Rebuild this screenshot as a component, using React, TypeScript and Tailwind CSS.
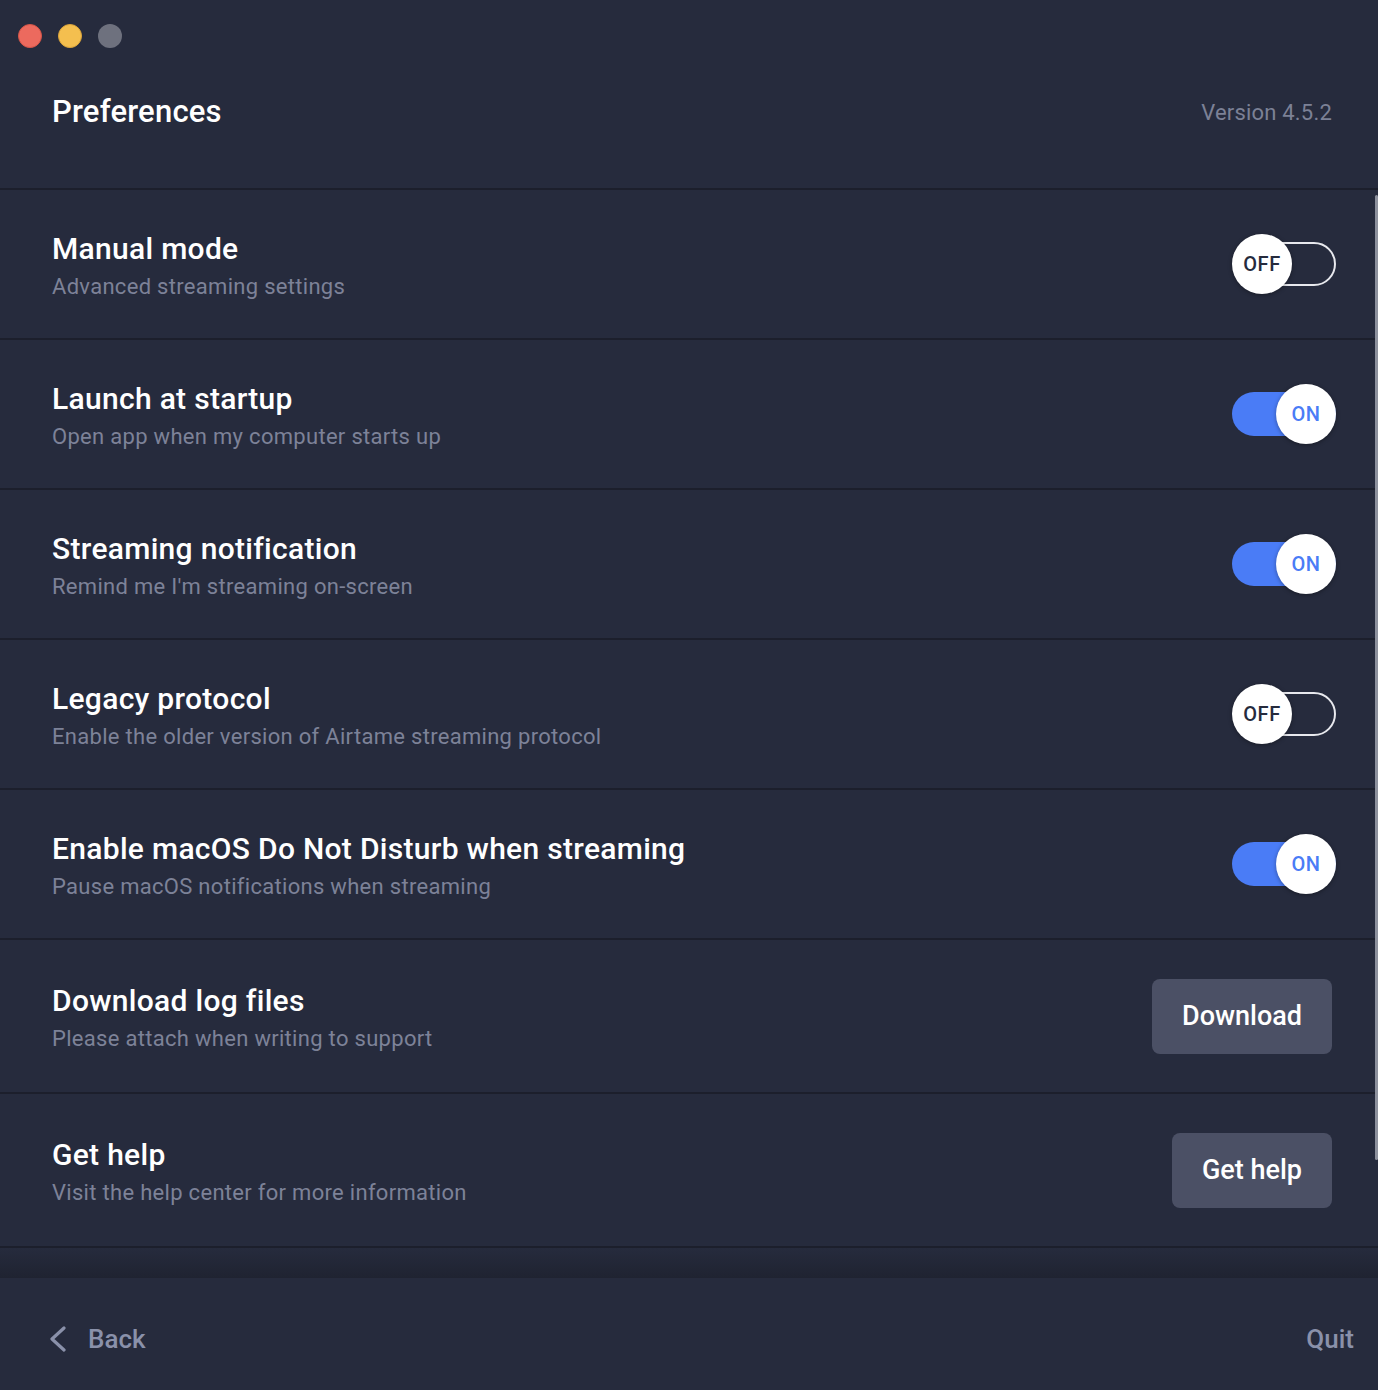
const font = { fontFamily: 'Roboto, "Noto Sans", sans-serif' }

type Row = {
  title: string
  subtitle: string
  toggle?: boolean
  button?: string
}

const rows: Row[] = [
  { title: 'Manual mode', subtitle: 'Advanced streaming settings', toggle: false },
  { title: 'Launch at startup', subtitle: 'Open app when my computer starts up', toggle: true },
  { title: 'Streaming notification', subtitle: "Remind me I'm streaming on-screen", toggle: true },
  { title: 'Legacy protocol', subtitle: 'Enable the older version of Airtame streaming protocol', toggle: false },
  { title: 'Enable macOS Do Not Disturb when streaming', subtitle: 'Pause macOS notifications when streaming', toggle: true },
  { title: 'Download log files', subtitle: 'Please attach when writing to support', button: 'Download' },
  { title: 'Get help', subtitle: 'Visit the help center for more information', button: 'Get help' },
]

function Toggle({ on }: { on: boolean }) {
  return (
    <div className="relative w-[104px] h-[60px] -mr-1 shrink-0">
      {on ? (
        <div className="absolute left-0 right-0 top-[8px] h-[44px] rounded-full bg-[#4a7cf6]" />
      ) : (
        <div className="absolute left-[26px] right-0 top-[8px] h-[44px] rounded-full border-2 border-[#e8e9ee]" />
      )}
      <div
        className={`absolute top-0 ${on ? 'right-0' : 'left-0'} w-[60px] h-[60px] rounded-full bg-white shadow-[0_1px_4px_rgba(0,0,0,0.35)] flex items-center justify-center`}
      >
        <span
          className={`text-[20px] font-medium tracking-[0.5px] ${on ? 'text-[#4a7cf6]' : 'text-[#262b3d]'}`}
        >
          {on ? 'ON' : 'OFF'}
        </span>
      </div>
    </div>
  )
}

export default function App() {
  return (
    <div style={font} className="relative w-[1378px] h-[1390px] bg-[#262b3d] flex flex-col overflow-hidden">
      {/* Header */}
      <div className="h-[188px] shrink-0 flex flex-col">
        <div className="flex items-center gap-4 pl-[18px] pt-6">
          <span className="w-6 h-6 rounded-full bg-[#ec6a5e] border border-[#d65548]" />
          <span className="w-6 h-6 rounded-full bg-[#f4bf4f] border border-[#dca53a]" />
          <span className="w-6 h-6 rounded-full bg-[#6e717e]" />
        </div>
        <div className="flex items-center justify-between pl-[52px] pr-[46px] h-[50px] mt-[39px]">
          <h1 className="text-[31px] font-medium tracking-[0.2px] text-white">Preferences</h1>
          <span className="text-[22px] tracking-[0.2px] text-[#7c8196]">Version 4.5.2</span>
        </div>
      </div>

      <div className="flex flex-col border-t-2 border-[#1c1f2c]">
        {rows.map((row) => (
          <div
            key={row.title}
            className={`${row.button ? 'h-[154px]' : 'h-[150px]'} shrink-0 flex items-center justify-between pl-[52px] pr-[46px] border-b-2 border-[#1c1f2c]`}
          >
            <div className="flex flex-col pt-[4px]">
              <span className="text-[30px] font-medium tracking-[0.3px] text-white leading-[38px]">{row.title}</span>
              <span className="text-[22px] tracking-[0.3px] text-[#7d8298] leading-[32px] mt-[3px]">{row.subtitle}</span>
            </div>
            {row.button ? (
              <button className="h-[75px] px-[30px] rounded-lg bg-[#4b5065] text-white text-[27px] font-medium">
                {row.button}
              </button>
            ) : (
              <Toggle on={!!row.toggle} />
            )}
          </div>
        ))}
      </div>

      <div className="h-[30px] shrink-0 bg-gradient-to-b from-[#262b3d] to-[#1f2331]" />

      {/* Footer */}
      <div className="flex-1 flex items-center justify-between pl-[48px] pr-[24px] pt-[10px]">
        <button className="flex items-center gap-[20px] text-[#8a91aa]">
          <svg width="20" height="26" viewBox="0 0 20 26" fill="none">
            <path d="M16 2 L4 13 L16 24" stroke="#8a91aa" strokeWidth="3.2" strokeLinecap="round" strokeLinejoin="round" />
          </svg>
          <span className="text-[26px] font-medium">Back</span>
        </button>
        <button className="text-[26px] font-medium text-[#8a91aa]">Quit</button>
      </div>

      {/* Scrollbar */}
      <div className="absolute right-0 top-[195px] w-[3px] h-[965px] rounded-full bg-[#8d919d]" />
    </div>
  )
}
